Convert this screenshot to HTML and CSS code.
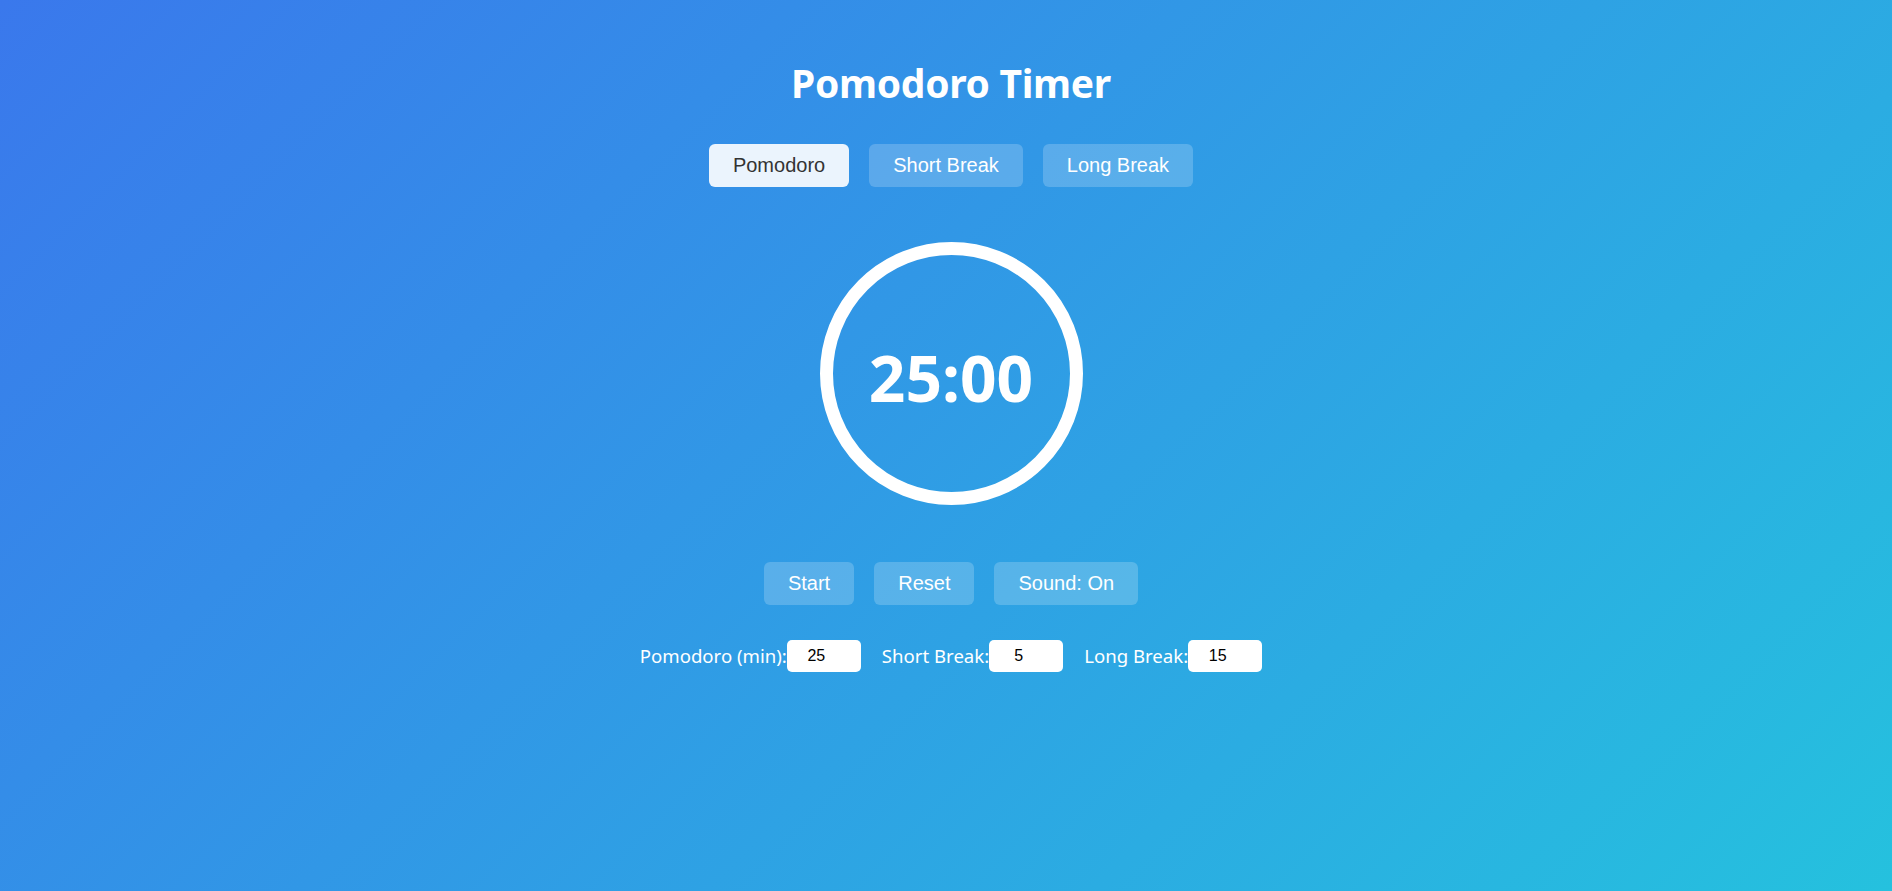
FILE: index.html
```html
<!DOCTYPE html>
<html lang="en">
<head>
<meta charset="utf-8">
<title>Pomodoro Timer</title>
<link rel="stylesheet" href="styles.css">
</head>
<body>
  <main class="app">
    <h1 class="title">Pomodoro Timer</h1>
    <div class="modes">
      <button class="btn mode active">Pomodoro</button>
      <button class="btn mode">Short Break</button>
      <button class="btn mode">Long Break</button>
    </div>
    <div class="dial">
      <span class="time">25:00</span>
    </div>
    <div class="controls">
      <button class="btn">Start</button>
      <button class="btn">Reset</button>
      <button class="btn">Sound: On</button>
    </div>
    <div class="settings">
      <label class="field">Pomodoro (min):<input class="num" type="number" value="25"></label>
      <label class="field">Short Break:<input class="num" type="number" value="5"></label>
      <label class="field">Long Break:<input class="num" type="number" value="15"></label>
    </div>
  </main>
</body>
</html>
```

FILE: styles.css
```css
html, body {
  margin: 0;
  padding: 0;
}

body {
  min-height: 100vh;
  background: linear-gradient(135deg, #3a78ec 0%, #25c1de 100%);
  font-family: "Noto Sans", "Open Sans", sans-serif;
  color: #fff;
}

.app {
  display: flex;
  flex-direction: column;
  align-items: center;
  padding: 59px 0 0 10px;
}

.title {
  margin: 0;
  font-size: 39px;
  line-height: 48px;
  font-weight: 700;
  letter-spacing: -0.3px;
}

.modes {
  display: flex;
  gap: 20px;
  margin-top: 37px;
}

.btn {
  font-family: "Liberation Sans", Arial, sans-serif;
  font-size: 20px;
  line-height: 23px;
  padding: 10px 24px;
  border: none;
  border-radius: 6px;
  background: rgba(255, 255, 255, 0.2);
  color: #fff;
  cursor: pointer;
}

.btn.active {
  background: rgba(255, 255, 255, 0.9);
  color: #333;
}

.dial {
  box-sizing: border-box;
  width: 263px;
  height: 263px;
  margin-top: 55px;
  border: 13px solid #fff;
  border-radius: 50%;
  display: flex;
  align-items: center;
  justify-content: center;
}

.time {
  font-size: 64px;
  font-weight: 700;
  line-height: 1;
  margin-top: 8px;
}

.controls {
  display: flex;
  gap: 20px;
  margin-top: 57px;
}

.settings {
  display: flex;
  gap: 21px;
  margin-top: 35px;
}

.field {
  display: flex;
  align-items: center;
  font-size: 18.6px;
  line-height: 32px;
}

.num {
  box-sizing: border-box;
  width: 74px;
  height: 32px;
  padding: 5px;
  border: none;
  border-radius: 5px;
  background: #fff;
  color: #000;
  font-family: "Liberation Sans", Arial, sans-serif;
  font-size: 16px;
  text-align: center;
}
```
